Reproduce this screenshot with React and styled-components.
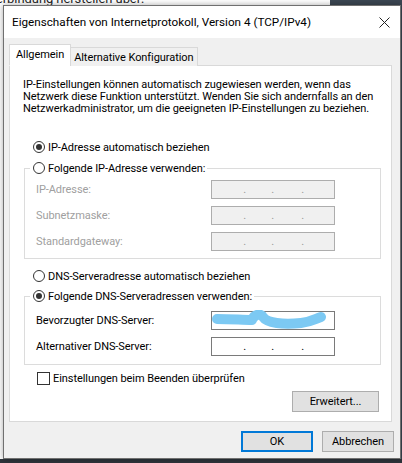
import React from "react";
import styled, { createGlobalStyle } from "styled-components";

const GlobalStyle = createGlobalStyle`
  html, body {
    margin: 0;
    padding: 0;
  }
  body {
    font-family: Roboto, "Noto Sans", sans-serif;
    font-size: 11px;
    letter-spacing: -0.07px;
    color: #000;
  }
`;

const Screen = styled.div`
  width: 402px;
  height: 463px;
  overflow: hidden;
  background:
    linear-gradient(to bottom, transparent 459px, #2e343b 459px),
    linear-gradient(to right, #fff 330px, #3b4652 330px);
`;

const BehindStrip = styled.div`
  height: 5px;
  overflow: hidden;
  font-size: 13px;
  line-height: 13px;
  color: #222;
  & > span {
    display: block;
    margin: -8px 0 0 -12px;
  }
`;

const Window = styled.div`
  margin-left: 3px;
  width: 396px;
  height: 452px;
  border: 1px solid #707070;
  background: #f0f0f0;
  box-shadow: 0 0 6px rgba(0, 0, 0, 0.35);
  display: flex;
  flex-direction: column;
`;

const TitleBar = styled.div`
  height: 32px;
  flex: none;
  background: #fff;
  display: flex;
  align-items: center;
  justify-content: space-between;
  padding: 0 10px 0 8px;
  font-size: 11.7px;
  letter-spacing: 0;
`;

const CloseButton = styled.div`
  width: 12px;
  height: 12px;
  display: flex;
  align-items: center;
  justify-content: center;
`;

const Body = styled.div`
  flex: 1;
  padding: 6px 6px 0 5px;
  display: flex;
  flex-direction: column;
`;

const TabRow = styled.div`
  display: flex;
  align-items: flex-end;
  height: 22px;
  position: relative;
  z-index: 1;
`;

const Tab = styled.div`
  height: ${({ $active }) => ($active ? "22px" : "19px")};
  padding: 0 ${({ $active }) => ($active ? "6px" : "3px")};
  box-sizing: border-box;
  display: flex;
  align-items: center;
  background: ${({ $active }) => ($active ? "#fff" : "#f0f0f0")};
  border: 1px solid #d9d9d9;
  border-bottom: ${({ $active }) => ($active ? "1px solid #fff" : "none")};
  margin-left: ${({ $active }) => ($active ? "0" : "-1px")};
  padding-bottom: ${({ $active }) => ($active ? "2px" : "0")};
  white-space: nowrap;
`;

const Panel = styled.div`
  width: 383px;
  height: 357px;
  box-sizing: border-box;
  margin-top: -1px;
  background: #fff;
  border: 1px solid #d9d9d9;
  padding: 13px 10px 0 13px;
  display: flex;
  flex-direction: column;
`;

const Intro = styled.p`
  margin: 0;
  line-height: 12px;
  white-space: nowrap;
`;

const RadioRow = styled.label`
  display: flex;
  align-items: center;
  gap: 3px;
  height: 14px;
  margin-left: ${({ $indent }) => $indent ?? 10}px;
  margin-top: ${({ $top }) => $top ?? 0}px;
  padding-right: ${({ $tail }) => $tail ?? 0}px;
  color: #000;
  white-space: nowrap;
`;

const RadioDot = styled.span`
  width: 12px;
  height: 12px;
  box-sizing: border-box;
  border-radius: 50%;
  border: 1px solid #333;
  background: #fff;
  display: flex;
  align-items: center;
  justify-content: center;
  flex: none;
  &::after {
    content: "";
    width: 6px;
    height: 6px;
    border-radius: 50%;
    background: ${({ $checked }) => ($checked ? "#333" : "transparent")};
  }
`;

const Group = styled.fieldset`
  margin: ${({ $top }) => $top}px 0 0 1px;
  width: 357px;
  min-width: 0;
  box-sizing: border-box;
  border: 1px solid #dcdcdc;
  padding: ${({ $pad }) => $pad};
  display: flex;
  flex-direction: column;
  gap: 7px;
`;

const Legend = styled.legend`
  padding: 0 0 0 3px;
  margin-left: -6px;
`;

const FieldRow = styled.div`
  display: grid;
  grid-template-columns: 175px 124px;
  align-items: center;
  color: ${({ $disabled }) => ($disabled ? "#a0a0a0" : "#000")};
`;

const IpBox = styled.div`
  position: relative;
  height: 19px;
  box-sizing: border-box;
  border: 1px solid ${({ $disabled }) => ($disabled ? "#adadad" : "#7a7a7a")};
  background: ${({ $disabled }) => ($disabled ? "#f0f0f0" : "#fff")};
  display: grid;
  grid-template-columns: 34px 28px 30px 30px;
  align-items: end;
  padding-bottom: 3px;
  color: ${({ $disabled }) => ($disabled ? "#9a9a9a" : "#000")};
  font-size: 11px;
  line-height: 10px;
`;

const Dot = styled.span`
  text-align: right;
`;

const Scribble = styled.svg`
  position: absolute;
  left: -1px;
  top: -2px;
`;

const CheckRow = styled.label`
  display: flex;
  align-items: center;
  gap: 3px;
  margin: 6px 0 0 14px;
  height: 14px;
  white-space: nowrap;
`;

const CheckBox = styled.span`
  width: 13px;
  height: 13px;
  box-sizing: border-box;
  border: 1px solid #333;
  background: #fff;
  flex: none;
`;

const ButtonLine = styled.div`
  display: flex;
  justify-content: flex-end;
  gap: 9px;
  margin-top: ${({ $top }) => $top}px;
  padding-right: ${({ $right }) => $right}px;
`;

const Button = styled.button`
  font: inherit;
  letter-spacing: inherit;
  color: #000;
  width: ${({ $w }) => $w}px;
  height: ${({ $h }) => $h ?? 22}px;
  box-sizing: border-box;
  background: #e1e1e1;
  border: ${({ $primary }) => ($primary ? "2px solid #0078d7" : "1px solid #adadad")};
  padding: 0;
  margin: 0;
`;

function IpField({ disabled, redacted }) {
  return (
    <IpBox $disabled={disabled}>
      <Dot>.</Dot>
      <Dot>.</Dot>
      <Dot>.</Dot>
      <span />
      {redacted && (
        <Scribble width="124" height="22" viewBox="0 0 124 22">
          <path
            d="M6 9 C 20 9, 32 10, 41 10 C 43 4, 50 3, 52 7 C 56 13, 72 15, 90 13 C 100 12, 104 9, 110 7"
            fill="none"
            stroke="#7cc9f3"
            strokeWidth="10"
            strokeLinecap="round"
            strokeLinejoin="round"
          />
        </Scribble>
      )}
    </IpBox>
  );
}

export default function App() {
  return (
    <>
      <GlobalStyle />
      <Screen>
        <BehindStrip>
          <span>Verbindung herstellen über:</span>
        </BehindStrip>
        <Window>
          <TitleBar>
            <span>Eigenschaften von Internetprotokoll, Version 4 (TCP/IPv4)</span>
            <CloseButton>
              <svg width="11" height="11" viewBox="0 0 11 11">
                <path d="M0.5 0.5 L10.5 10.5 M10.5 0.5 L0.5 10.5" stroke="#222" strokeWidth="1" />
              </svg>
            </CloseButton>
          </TitleBar>
          <Body>
            <TabRow>
              <Tab $active>Allgemein</Tab>
              <Tab>Alternative Konfiguration</Tab>
            </TabRow>
            <Panel>
              <Intro>
                IP-Einstellungen können automatisch zugewiesen werden, wenn das
                <br />
                Netzwerk diese Funktion unterstützt. Wenden Sie sich andernfalls an den
                <br />
                Netzwerkadministrator, um die geeigneten IP-Einstellungen zu beziehen.
              </Intro>

              <RadioRow $top={25}>
                <RadioDot $checked />
                IP-Adresse automatisch beziehen
              </RadioRow>

              <Group $top={7} $pad="5px 0 7px 11px">
                <Legend>
                  <RadioRow $indent={0} $tail={2}>
                    <RadioDot />
                    Folgende IP-Adresse verwenden:
                  </RadioRow>
                </Legend>
                <FieldRow $disabled>
                  <span>IP-Adresse:</span>
                  <IpField disabled />
                </FieldRow>
                <FieldRow $disabled>
                  <span>Subnetzmaske:</span>
                  <IpField disabled />
                </FieldRow>
                <FieldRow $disabled>
                  <span>Standardgateway:</span>
                  <IpField disabled />
                </FieldRow>
              </Group>

              <RadioRow $top={10}>
                <RadioDot />
                DNS-Serveradresse automatisch beziehen
              </RadioRow>

              <Group $top={6} $pad="8px 0 8px 11px">
                <Legend>
                  <RadioRow $indent={0} $tail={2}>
                    <RadioDot $checked />
                    Folgende DNS-Serveradressen verwenden:
                  </RadioRow>
                </Legend>
                <FieldRow>
                  <span>Bevorzugter DNS-Server:</span>
                  <IpField redacted />
                </FieldRow>
                <FieldRow>
                  <span>Alternativer DNS-Server:</span>
                  <IpField />
                </FieldRow>
              </Group>

              <CheckRow>
                <CheckBox />
                Einstellungen beim Beenden überprüfen
              </CheckRow>

              <ButtonLine $top={6} $right={2}>
                <Button $w={87} $h={21}>Erweitert...</Button>
              </ButtonLine>
            </Panel>
            <ButtonLine $top={9} $right={0}>
              <Button $primary $w={72} $h={21}>OK</Button>
              <Button $w={72} $h={21}>Abbrechen</Button>
            </ButtonLine>
          </Body>
        </Window>
      </Screen>
    </>
  );
}
